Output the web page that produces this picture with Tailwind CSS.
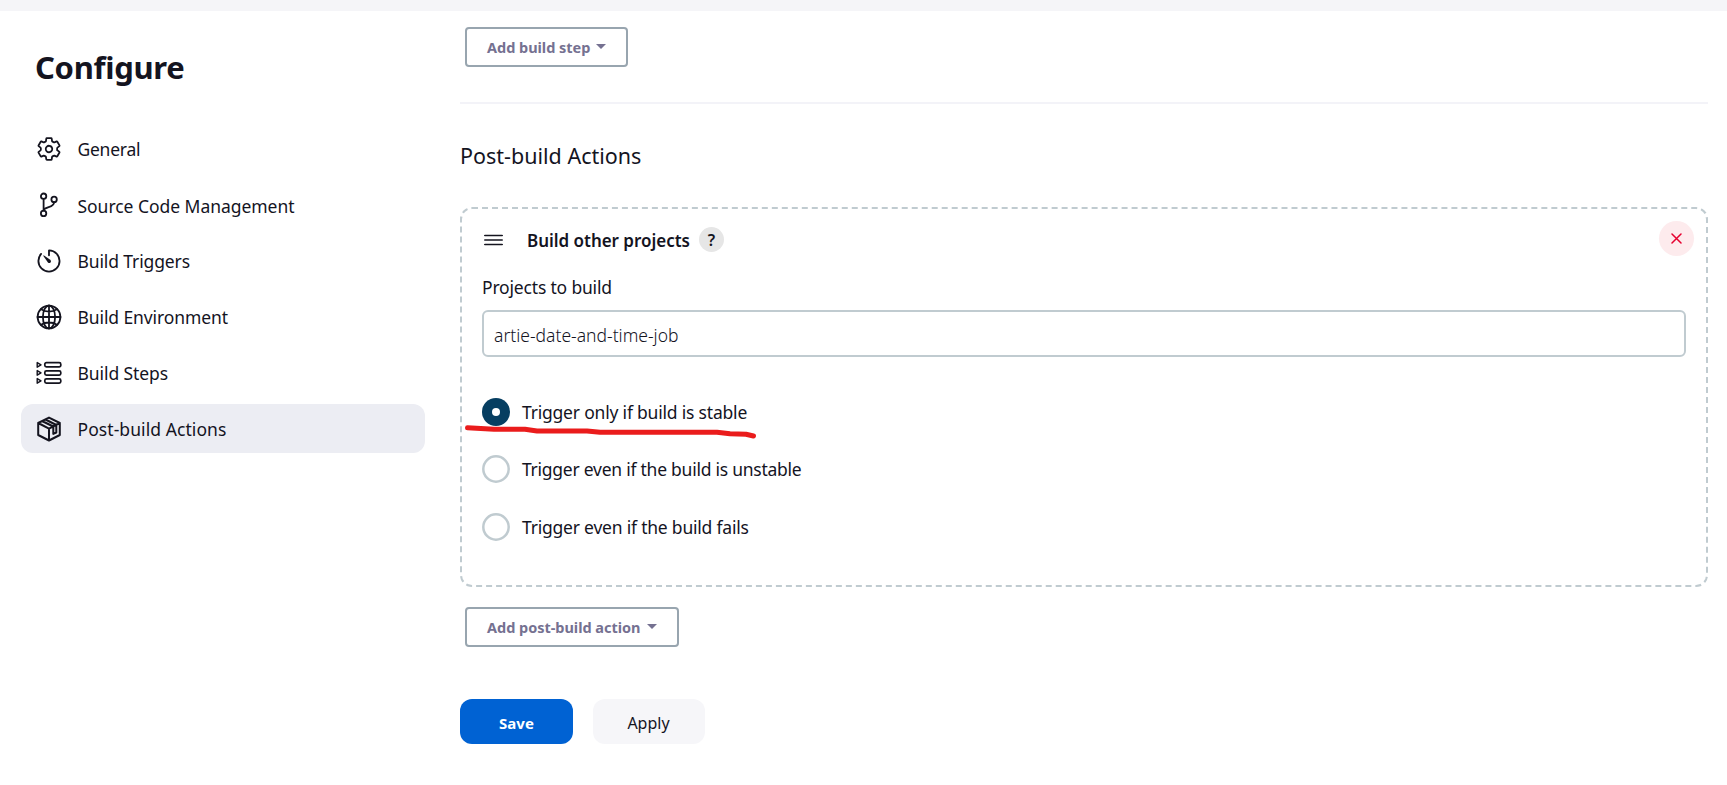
<!DOCTYPE html>
<html lang="en">
<head>
<meta charset="utf-8">
<title>Configure</title>
<script src="https://cdn.jsdelivr.net/npm/@tailwindcss/browser@4"></script>
</head>
<body class="relative h-[785px] overflow-hidden bg-white font-['Noto_Sans',sans-serif] text-[17.5px] leading-6 text-[#14141f]">
<div class="h-[11px] bg-[#f5f5f8]"></div>
<div class="flex">
  <aside class="w-[460px] shrink-0 pl-[21px]">
    <h1 class="mt-[35px] pl-[14px] text-[31px] leading-[42px] font-bold tracking-[-0.3px]">Configure</h1>
    <nav class="mt-[36px] flex w-[404px] flex-col gap-[7px]">
      <a class="flex h-[49px] items-center gap-[16px] rounded-[12px] pl-[14.5px]">
        <svg class="size-[26px]" viewBox="0 0 512 512" fill="none" stroke="currentColor" stroke-width="35" stroke-linecap="round" stroke-linejoin="round"><path d="M262.29 192.31a64 64 0 1 0 57.4 57.4 64.13 64.13 0 0 0-57.4-57.4zM416.39 256a154.34 154.34 0 0 1-1.53 20.79l45.21 35.46a10.81 10.81 0 0 1 2.45 13.75l-42.77 74a10.81 10.81 0 0 1-13.14 4.59l-44.9-18.08a16.11 16.11 0 0 0-15.17 1.75A164.48 164.48 0 0 1 325 400.8a15.94 15.94 0 0 0-8.82 12.14l-6.73 47.89a11.08 11.08 0 0 1-10.68 9.17h-85.54a11.11 11.11 0 0 1-10.69-8.87l-6.72-47.82a16.07 16.07 0 0 0-9-12.22 155.3 155.3 0 0 1-21.46-12.57 16 16 0 0 0-15.11-1.71l-44.89 18.07a10.81 10.81 0 0 1-13.14-4.58l-42.77-74a10.8 10.8 0 0 1 2.45-13.75l38.21-30a16.05 16.05 0 0 0 6-14.08c-.36-4.17-.58-8.33-.58-12.5s.21-8.27.58-12.35a16 16 0 0 0-6.07-13.94l-38.19-30A10.81 10.81 0 0 1 49.48 186l42.77-74a10.81 10.81 0 0 1 13.14-4.59l44.9 18.08a16.11 16.11 0 0 0 15.17-1.75A164.48 164.48 0 0 1 187 111.2a15.94 15.94 0 0 0 8.82-12.14l6.73-47.89A11.08 11.08 0 0 1 213.23 42h85.54a11.11 11.11 0 0 1 10.69 8.87l6.72 47.82a16.07 16.07 0 0 0 9 12.22 155.3 155.3 0 0 1 21.46 12.57 16 16 0 0 0 15.11 1.71l44.89-18.07a10.81 10.81 0 0 1 13.14 4.58l42.77 74a10.8 10.8 0 0 1-2.45 13.75l-38.21 30a16.05 16.05 0 0 0-6.05 14.08c.33 4.14.55 8.3.55 12.47z"/></svg>
        <span class="pt-[1px] tracking-[-0.25px]">General</span></a>
      <a class="flex h-[49px] items-center gap-[16px] rounded-[12px] pl-[14.5px]">
        <svg class="size-[26px]" viewBox="0 0 26 26" fill="none" stroke="currentColor" stroke-width="1.8" stroke-linecap="round"><circle cx="7.6" cy="4.2" r="2.7"/><circle cx="7.6" cy="21.4" r="2.7"/><circle cx="18.1" cy="7.4" r="2.7"/><path d="M7.6 7v11.6M18.1 10.2c0 5-7 4.200-10.500 7.400"/></svg>
        <span class="pt-[2px] tracking-[-0.04px]">Source Code Management</span></a>
      <a class="flex h-[49px] items-center gap-[16px] rounded-[12px] pl-[14.5px]">
        <svg class="size-[26px]" viewBox="0 0 512 512"><path d="M112.910 128A191.850 191.850 0 0 0 64 254c-1.180 106.350 85.650 193.800 192 194 106.200.2 192-85.830 192-192 0-104.540-83.550-189.610-187.500-192a4.360 4.360 0 0 0-4.500 4.370V152" transform="translate(-22 -22) scale(1.085)" fill="none" stroke="currentColor" stroke-width="33" stroke-linecap="round" stroke-linejoin="round"/><path d="M233.380 278.630l-79-113a8.130 8.130 0 0 1 11.320-11.320l113 79a32.500 32.500 0 0 1-37.250 53.260 33.210 33.210 0 0 1-8.070-7.940z" transform="translate(-22 -22) scale(1.085)" fill="currentColor"/></svg>
        <span class="pt-[1px] tracking-[-0.12px]">Build Triggers</span></a>
      <a class="flex h-[49px] items-center gap-[16px] rounded-[12px] pl-[14.5px]">
        <svg class="size-[26px]" viewBox="0 0 26 26" fill="none" stroke="currentColor" stroke-width="1.8" stroke-linecap="round"><circle cx="13" cy="13" r="11.400"/><ellipse cx="13" cy="13" rx="6.100" ry="11.400"/><path d="M13 1.500v23M1.500 13h23M5 5.200c4.700 3.100 11.300 3.100 16 0M5 20.800c4.700-3.100 11.300-3.100 16 0"/></svg>
        <span class="pt-[1px] tracking-[-0.1px]">Build Environment</span></a>
      <a class="flex h-[49px] items-center gap-[16px] rounded-[12px] pl-[14.5px]">
        <svg class="size-[26px]" viewBox="0 0 26 26" fill="none" stroke="currentColor" stroke-width="1.7" stroke-linejoin="round"><rect x="8.800" y="2.700" width="16" height="4.200" rx="1.600"/><rect x="8.800" y="10.900" width="16" height="4.200" rx="1.600"/><rect x="8.800" y="18.900" width="16" height="4.200" rx="1.600"/><path d="M1.200 2.600v4.600L5 4.900zM1.200 10.600v4.600L5 12.900zM1.200 18.600v4.600L5 20.900z" stroke-width="1.400"/></svg>
        <span class="pt-[1px] tracking-[-0.08px]">Build Steps</span></a>
      <a class="flex h-[49px] items-center gap-[16px] rounded-[12px] bg-[#ecedf3] pl-[14.5px]">
        <svg class="size-[26px]" viewBox="0 0 26 26" fill="none" stroke="currentColor" stroke-width="2" stroke-linecap="round" stroke-linejoin="round"><path d="M13 1.600 23.800 7v12L13 24.500 2.200 19V7zM2.200 7 13 12.700 23.800 7M13 12.700v11.800M9.500 3.500l10.800 5.500v7.500l-3 1.400v-7.400L6 5M6.500 5.200l11 5.500"/></svg>
        <span class="pt-[1px] tracking-[0.07px]">Post-build Actions</span></a>
    </nav>
  </aside>
  <main class="w-[1248px]">
    <button class="mt-[16px] ml-[5px] flex h-[40px] w-[163px] items-center rounded-[4px] border-2 border-[#98a5af] pl-[20px] text-[14.5px] font-bold tracking-[-0.03px] text-[#757191]">Add build step<svg class="mb-[2px] ml-[6px] h-[5px] w-[10px]" viewBox="0 0 10 5"><path d="M0 0h10L5 5z" fill="currentColor"/></svg></button>
    <hr class="mt-[35px] border-t-2 border-[#f3f3f8]">
    <h2 class="mt-[37px] text-[21.5px] leading-[30px]">Post-build Actions</h2>
    <section class="mt-[36px] h-[380px] rounded-[12px] border-2 border-dashed border-[#c0cbd0] pr-[20px] pl-[20px]">
      <div class="flex h-[61px] items-center">
        <svg class="ml-[2px] h-[12px] w-[19px]" viewBox="0 0 19 12" stroke="currentColor" stroke-width="1.700" stroke-linecap="round"><path d="M.8 1.500h17.400M.8 6h17.400M.8 10.500h17.400"/></svg>
        <b class="ml-[24px] w-[164px] pt-[2px] text-[17px] font-semibold whitespace-nowrap tracking-[-0.03px]">Build other projects</b>
        <span class="ml-[8px] flex size-[25px] items-center justify-center rounded-full bg-[#e6e6e6] text-[16px] font-semibold">?</span>
        <button class="mt-[-2px] mr-[-8px] ml-auto flex size-[35px] items-center justify-center rounded-full bg-[#fdebed] text-[#e6002f]"><svg class="size-[11px]" viewBox="0 0 11 11" stroke="currentColor" stroke-width="1.500" stroke-linecap="round"><path d="M1 1l9 9M10 1l-9 9"/></svg></button>
      </div>
      <div class="mt-[5px] tracking-[-0.18px]">Projects to build</div>
      <div class="mt-[11px] flex h-[47px] items-center rounded-[6px] border-2 border-[#c0cbd0] pt-[2px] pl-[10px] font-light">artie-date-and-time-job</div>
      <div class="mt-[41px] flex flex-col gap-[30px]">
        <label class="flex h-[27.5px] items-center gap-[12px]"><span class="flex size-[28px] items-center justify-center rounded-full bg-[#063e61]"><span class="size-[8px] rounded-full bg-white"></span></span><span class="tracking-[-0.2px]">Trigger only if build is stable</span></label>
        <label class="flex h-[27.5px] items-center gap-[12px]"><svg class="size-[28px]" viewBox="0 0 28 28" fill="none" stroke="#c0cbd0" stroke-width="2.500"><circle cx="14" cy="14" r="12.700"/></svg><span class="tracking-[-0.25px]">Trigger even if the build is unstable</span></label>
        <label class="flex h-[27.5px] items-center gap-[12px]"><svg class="size-[28px]" viewBox="0 0 28 28" fill="none" stroke="#c0cbd0" stroke-width="2.500"><circle cx="14" cy="14" r="12.700"/></svg><span class="tracking-[-0.21px]">Trigger even if the build fails</span></label>
      </div>
    </section>
    <button class="mt-[20px] ml-[5px] flex h-[40px] w-[214px] items-center rounded-[4px] border-2 border-[#98a5af] pl-[20px] text-[14.5px] font-bold tracking-[-0.03px] text-[#757191]">Add post-build action<svg class="mb-[1px] ml-[7px] h-[5px] w-[10px]" viewBox="0 0 10 5"><path d="M0 0h10L5 5z" fill="currentColor"/></svg></button>
    <div class="mt-[52px] flex gap-[20px]">
      <button class="h-[45px] w-[113px] rounded-[12px] bg-[#0062d3] pt-[3px] text-[15px] font-bold text-white">Save</button>
      <button class="h-[45px] w-[112px] rounded-[12px] bg-[#f6f6f9] pt-[3px] pr-[1px] text-[16px]">Apply</button>
    </div>
  </main>
</div>
<svg class="absolute top-[420px] left-[460px] h-[24px] w-[304px]" viewBox="460 420 304 24" fill="none" stroke="#ea1c1c" stroke-width="5" stroke-linecap="round" stroke-linejoin="round"><path d="M467.500 427.800 494 429.300H525L537 430.900H587L600 432.200H717L730 433.700 746 434.200 753.500 436"/></svg>
</body>
</html>
